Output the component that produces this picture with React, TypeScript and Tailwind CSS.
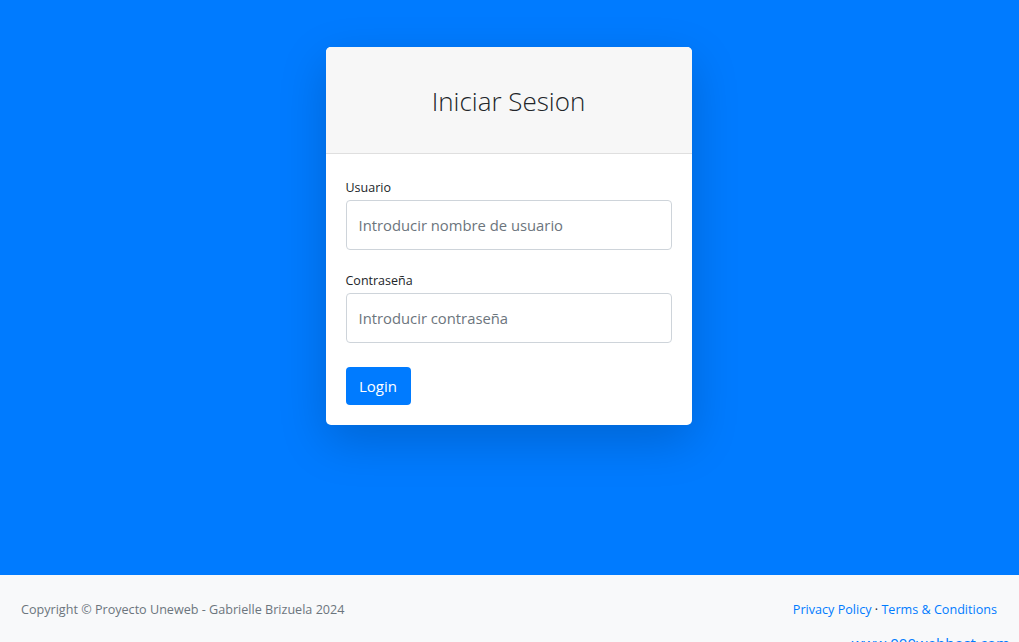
import React from "react";

export default function App() {
  const font = { fontFamily: '"Open Sans", "Noto Sans", "Liberation Sans", sans-serif' };
  return (
    <div className="min-h-screen bg-[#f8f9fa]" style={font}>
      <main className="h-[575px] bg-[#007bff] pt-[47px]">
        <div className="mx-auto w-[366px] -translate-x-px overflow-hidden rounded-[5px] bg-white shadow-[0_1rem_3rem_rgba(0,0,0,0.175)]">
          <div className="flex h-[107px] items-center justify-center border-b border-[#dfdfdf] bg-[#f7f7f7] pt-[2px]">
            <h3 className="text-[26px] font-light leading-[34px] text-[#212529]">Iniciar Sesion</h3>
          </div>
          <div className="px-5 pt-6 pb-5">
            <label className="mb-[3px] block text-[12.5px] leading-[19px] text-[#212529]">Usuario</label>
            <input
              className="block h-[50px] w-full rounded-[4px] border border-[#ced4da] px-3 text-[14.8px] text-[#495057] placeholder:text-[#6c757d] outline-none"
              placeholder="Introducir nombre de usuario"
            />
            <label className="mt-[21px] mb-[3px] block text-[12.5px] leading-[19px] text-[#212529]">Contraseña</label>
            <input
              type="password"
              className="block h-[50px] w-full rounded-[4px] border border-[#ced4da] px-3 text-[14.8px] text-[#495057] placeholder:text-[#6c757d] outline-none"
              placeholder="Introducir contraseña"
            />
            <div className="mt-6">
              <button className="h-[38px] w-[65px] rounded-[4px] bg-[#007bff] text-[15px] text-white">Login</button>
            </div>
          </div>
        </div>
      </main>
      <footer className="bg-[#f8f9fa] px-[21px] pt-6">
        <div className="flex items-center justify-between text-[12.6px] leading-[21px]">
          <div className="text-[#6c757d]">Copyright © Proyecto Uneweb - Gabrielle Brizuela 2024</div>
          <div className="mr-px text-[#212529]">
            <a className="text-[#007bff]">Privacy Policy</a>
            {" · "}
            <a className="text-[#007bff]">Terms &amp; Conditions</a>
          </div>
        </div>
        <div className="mt-[12px] -mr-[12px] text-right text-[15px] leading-[22px] text-[#007bff]">www.000webhost.com</div>
      </footer>
    </div>
  );
}
